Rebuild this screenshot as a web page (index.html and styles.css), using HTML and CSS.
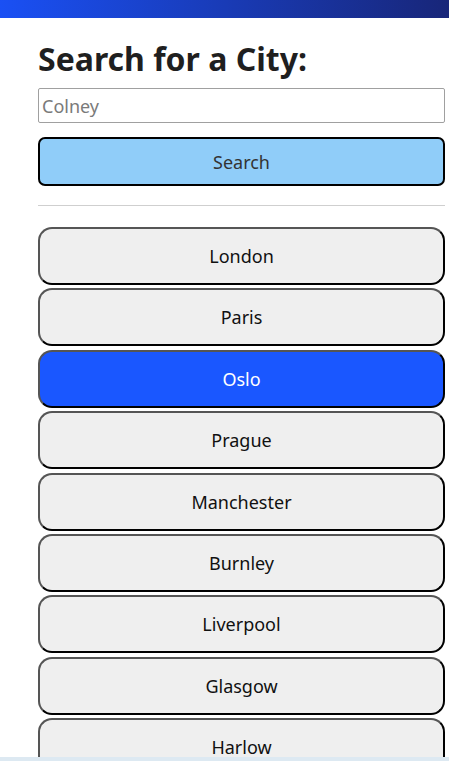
FILE: index.html
```html
<!DOCTYPE html>
<html lang="en">
<head>
<meta charset="utf-8">
<title>City Search</title>
<link rel="stylesheet" href="styles.css">
</head>
<body>
<div class="topbar"></div>
<main class="content">
  <h1 class="title">Search for a City:</h1>
  <input class="search-input" type="text" placeholder="Colney">
  <button class="search-btn" type="button">Search</button>
  <hr class="divider">
  <div class="city-list">
    <button class="city" type="button">London</button>
    <button class="city" type="button">Paris</button>
    <button class="city active" type="button">Oslo</button>
    <button class="city" type="button">Prague</button>
    <button class="city" type="button">Manchester</button>
    <button class="city" type="button">Burnley</button>
    <button class="city" type="button">Liverpool</button>
    <button class="city" type="button">Glasgow</button>
    <button class="city" type="button">Harlow</button>
  </div>
</main>
<div class="bottom-strip"></div>
</body>
</html>
```
FILE: styles.css
```css
* { box-sizing: border-box; }
html, body { margin: 0; padding: 0; background: #fff; }
body {
  font-family: "Noto Sans", "Open Sans", sans-serif;
  color: #000;
  overflow: hidden;
  height: 761px;
}
.topbar {
  height: 18px;
  background: linear-gradient(to right, #1a50f4, #182679);
}
.content {
  padding: 0 4px 0 38px;
  display: flex;
  flex-direction: column;
}
.title {
  margin: 21px 0 9px;
  font-size: 32px;
  line-height: 40px;
  font-weight: 700;
  color: #1f1f1f;
}
.search-input {
  height: 35px;
  width: 100%;
  border: 1px solid #a0a0a0;
  border-radius: 2px;
  padding: 0 3px;
  font-family: inherit;
  font-size: 18px;
}
.search-input::placeholder { color: #7a7a7a; }
.search-btn {
  margin-top: 14px;
  height: 49px;
  width: 100%;
  background: #90cdf9;
  border: 2px solid #000;
  border-radius: 7px;
  font-family: inherit;
  font-size: 18px;
  color: #333;
}
.divider {
  margin: 19px 0 21px;
  border: 0;
  border-top: 1px solid #cfcfcf;
  height: 0;
}
.city-list {
  display: flex;
  flex-direction: column;
  gap: 3.4px;
}
.city {
  height: 58px;
  width: 100%;
  background: #efefef;
  border: 2px solid;
  border-color: #555 #000 #000 #555;
  border-radius: 14px;
  font-family: inherit;
  font-size: 18px;
  color: #111;
  flex-shrink: 0;
}
.city.active {
  background: #1a57ff;
  color: #fff;
}
.bottom-strip {
  position: fixed;
  left: 0;
  right: 0;
  bottom: 0;
  height: 4px;
  background: #dde9f2;
}
```
